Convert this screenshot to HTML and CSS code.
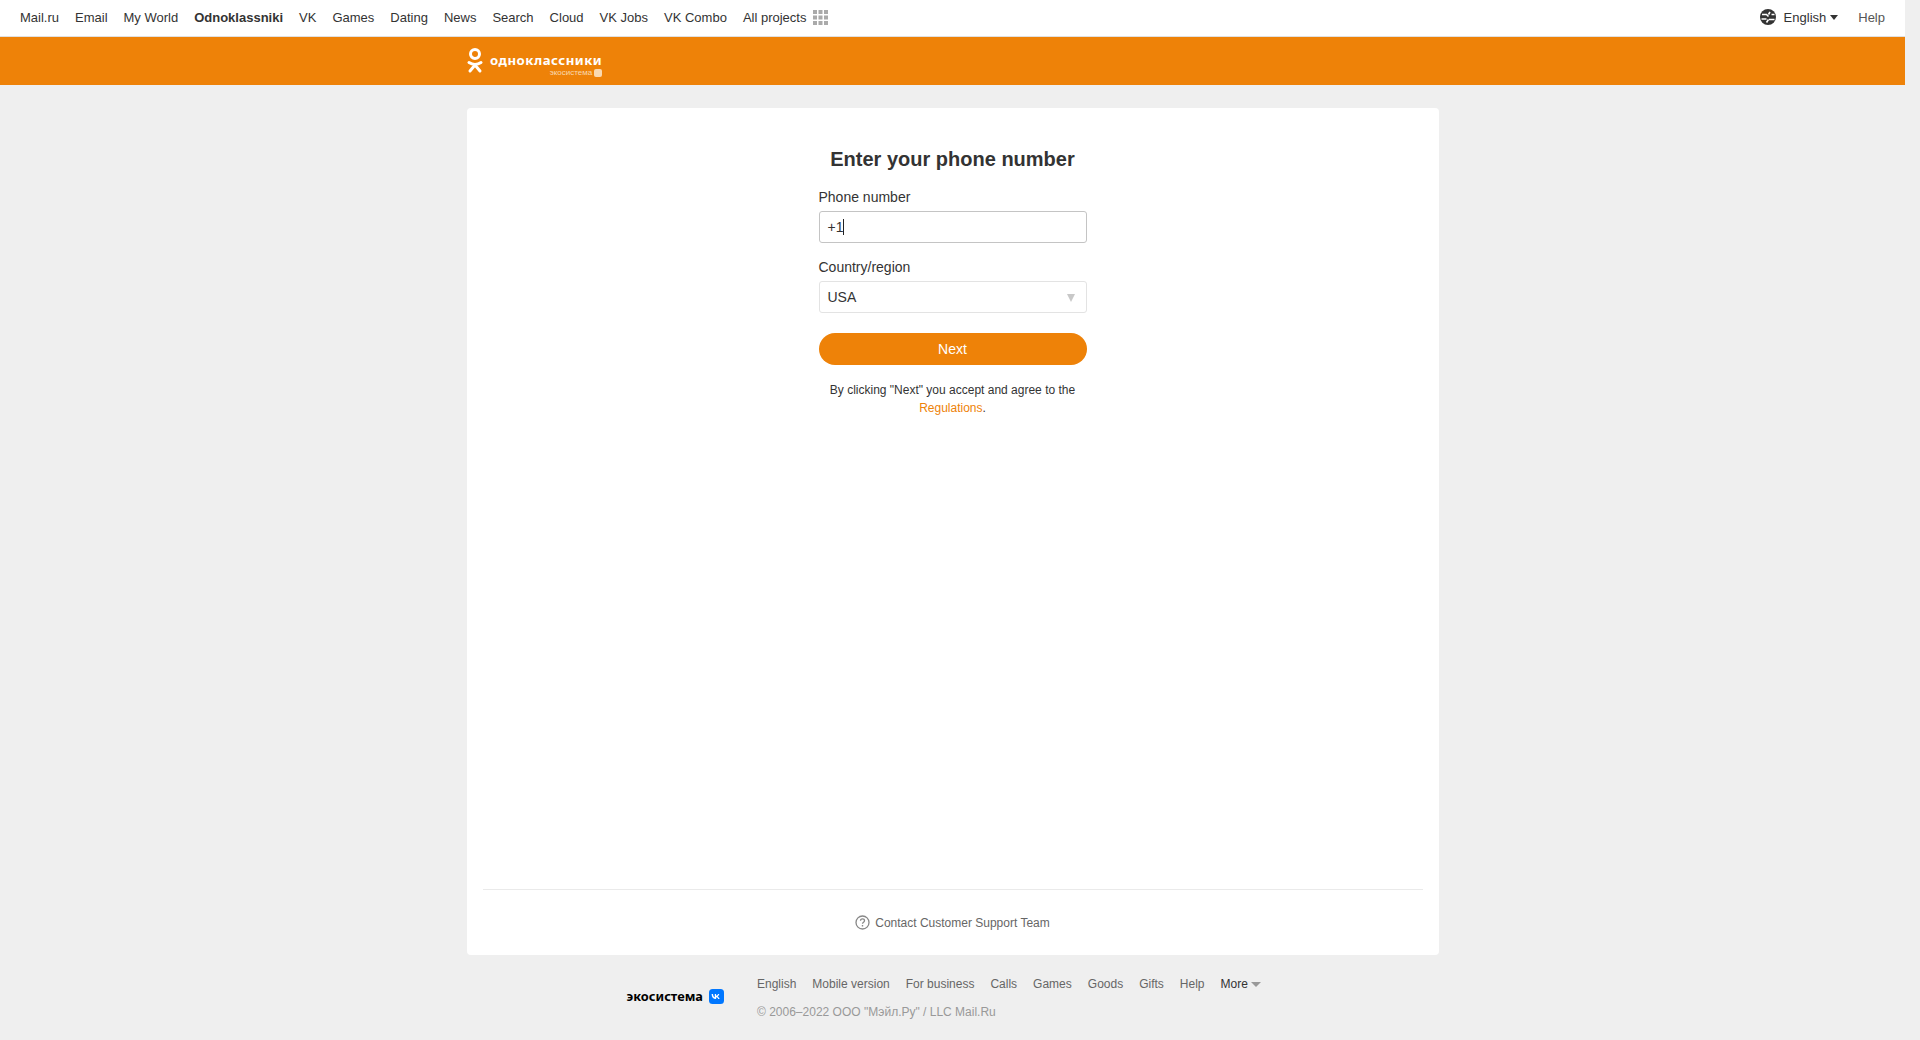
FILE: index.html
```html
<!DOCTYPE html>
<html lang="en">
<head>
<meta charset="utf-8">
<title>Enter your phone number</title>
<link rel="stylesheet" href="styles.css">
</head>
<body>
<div class="page">
  <header class="topbar">
    <nav class="topnav">
      <a>Mail.ru</a><a>Email</a><a>My World</a><a class="current">Odnoklassniki</a><a>VK</a><a>Games</a><a>Dating</a><a>News</a><a>Search</a><a>Cloud</a><a>VK Jobs</a><a>VK Combo</a>
      <a class="all">All projects
        <svg class="grid-icon" width="15" height="15" viewBox="0 0 15 15"><g fill="#aaa"><rect width="4" height="4"/><rect x="5.500" width="4" height="4"/><rect x="11" width="4" height="4"/><rect y="5.500" width="4" height="4"/><rect x="5.500" y="5.500" width="4" height="4"/><rect x="11" y="5.500" width="4" height="4"/><rect y="11" width="4" height="4"/><rect x="5.500" y="11" width="4" height="4"/><rect x="11" y="11" width="4" height="4"/></g></svg>
      </a>
    </nav>
    <div class="topright">
      <a class="lang">
        <svg width="16" height="16" viewBox="0 0 16 16"><circle cx="8" cy="8" r="8" fill="#333"/><path d="M2 5.500h4.500l2 2M14.500 5.500h-3M1.500 10h5M9 10.500h5.500M6.500 13.500l2-3M10 3l-1.500 2.500" stroke="#fff" stroke-width="1.600" fill="none"/></svg>
        <span>English</span><i class="caret"></i>
      </a>
      <a class="help">Help</a>
    </div>
  </header>
  <div class="brandbar">
    <div class="brand">
      <svg class="ok-icon" width="16" height="26" viewBox="0 0 16 26"><circle cx="8" cy="6" r="4.500" fill="none" stroke="#fff" stroke-width="3"/><path d="M2 14.500c3.500 2.400 8.500 2.400 12 0" fill="none" stroke="#fff" stroke-width="3" stroke-linecap="round"/><path d="M8 17l-5 6M8 17l5 6" fill="none" stroke="#fff" stroke-width="3" stroke-linecap="round"/></svg>
      <div class="brand-text">
        <span class="brand-name">одноклассники</span>
        <span class="brand-eco">экосистема <i class="eco-badge"></i></span>
      </div>
    </div>
  </div>
  <main class="card">
    <section class="form">
      <h1 class="title">Enter your phone number</h1>
      <label class="field-label">Phone number</label>
      <div class="input focused">+1<span class="text-caret"></span></div>
      <label class="field-label">Country/region</label>
      <div class="input select">USA<i class="select-arrow"></i></div>
      <button class="next">Next</button>
      <p class="terms">By clicking "Next" you accept and agree to the <a>Regulations</a>.</p>
    </section>
    <div class="support">
      <svg width="15" height="15" viewBox="0 0 15 15"><circle cx="7.500" cy="7.500" r="6.500" fill="none" stroke="#888" stroke-width="1.300"/><path d="M5.500 5.800c0-1.200.9-1.900 2-1.900s2 .7 2 1.800c0 1.500-2 1.500-2 3.100" fill="none" stroke="#888" stroke-width="1.300"/><rect x="6.800" y="10" width="1.400" height="1.500" fill="#888"/></svg>
      <a>Contact Customer Support Team</a>
    </div>
  </main>
  <footer class="footer">
    <div class="eco">
      <span>экосистема</span>
      <svg width="15" height="15" viewBox="0 0 15 15"><rect width="15" height="15" rx="3.500" fill="#0077ff"/><path d="M2.600 5h1.400c.1 2 1 3 1.800 3.200V5h1.300v1.800c.8-.1 1.600-.9 1.900-1.800h1.300c-.2 1.100-1 2-1.700 2.400.7.400 1.600 1.100 2 2.600h-1.400c-.3-.9-1-1.600-2.100-1.700V10h-.2C4.200 10 2.700 8.300 2.600 5z" fill="#fff"/></svg>
    </div>
    <div class="foot-main">
      <nav class="footnav">
        <a>English</a><a>Mobile version</a><a>For business</a><a>Calls</a><a>Games</a><a>Goods</a><a>Gifts</a><a>Help</a><a class="more">More<i class="more-caret"></i></a>
      </nav>
      <div class="copyright">© 2006–2022 ООО "Мэйл.Ру" / LLC Mail.Ru</div>
    </div>
  </footer>
</div>
</body>
</html>
```
FILE: styles.css
```css
html, body {
  margin: 0;
  height: 100%;
  background: #efefef;
  overflow: hidden;
}
body {
  font-family: "Liberation Sans", Arial, sans-serif;
  color: #333;
}
.page {
  width: 1905px;
}
.topbar {
  height: 34px;
  background: #fff;
  border-bottom: 1px solid #e0e0e0;
  display: flex;
  justify-content: space-between;
  align-items: center;
  padding: 0 20px 2px 20px;
  font-size: 13px;
}
.topnav {
  display: flex;
  gap: 16px;
  align-items: center;
  color: #333;
}
.topnav .current {
  font-weight: bold;
}
.all {
  display: flex;
  align-items: center;
  gap: 7px;
}
.topright {
  display: flex;
  align-items: center;
  gap: 20px;
}
.lang {
  display: flex;
  align-items: center;
  gap: 8px;
}
.caret {
  width: 0;
  height: 0;
  margin-left: -4px;
  border: 4px solid transparent;
  border-top: 5px solid #333;
  border-bottom: 0;
}
.help {
  color: #555;
}
.brandbar {
  height: 48px;
  background: #ee8208;
}
.brand {
  width: 972px;
  margin: 0 auto;
  height: 100%;
  display: flex;
  align-items: center;
  gap: 7px;
  color: #fff;
  padding-left: 1px;
}
.brand-text {
  display: flex;
  flex-direction: column;
  align-items: flex-end;
  margin-top: 8px;
}
.brand-name {
  font-family: "Noto Sans", sans-serif;
  font-size: 13.200px;
  font-weight: 700;
  line-height: 12px;
  letter-spacing: 0.5px;
}
.brand-eco {
  font-size: 8px;
  line-height: 8px;
  margin-top: 3px;
  color: #f9d9b0;
  display: flex;
  align-items: center;
  gap: 2px;
}
.eco-badge {
  width: 8px;
  height: 8px;
  border-radius: 2px;
  background: #f9d9b0;
}
.card {
  width: 972px;
  height: 847px;
  margin: 23px auto 0;
  background: #fff;
  border-radius: 4px;
  display: flex;
  flex-direction: column;
  padding: 0 16px;
  box-sizing: border-box;
}
.form {
  flex: 1;
  width: 268px;
  margin: 0 auto;
  display: flex;
  flex-direction: column;
}
.title {
  margin: 39px -20px 0;
  font-size: 20px;
  line-height: 24px;
  font-weight: bold;
  text-align: center;
  color: #333;
}
.field-label {
  font-size: 14px;
  line-height: 18px;
  margin-top: 17px;
  margin-bottom: 5px;
}
.input {
  position: relative;
  height: 32px;
  box-sizing: border-box;
  border: 1px solid #e3e3e3;
  border-radius: 3px;
  padding: 0 8px;
  font-size: 14px;
  line-height: 30px;
  background: #fff;
  display: flex;
  align-items: center;
}
.input.focused {
  border-color: #c4c4c4;
}
.input + .field-label {
  margin-top: 15px;
}
.text-caret {
  width: 1px;
  height: 16px;
  background: #222;
}
.select-arrow {
  position: absolute;
  right: 11px;
  top: 12px;
  width: 0;
  height: 0;
  border: 4px solid transparent;
  border-top: 8px solid #c8c8c8;
  border-bottom: 0;
}
.next {
  margin-top: 20px;
  height: 32px;
  border: 0;
  border-radius: 16px;
  background: #ee8208;
  color: #fff;
  font-family: inherit;
  font-size: 14px;
}
.terms {
  margin: 16px 0 0;
  font-size: 12px;
  line-height: 18px;
  text-align: center;
  color: #333;
}
.terms a {
  color: #ee8208;
}
.support {
  height: 65px;
  border-top: 1px solid #eaeaea;
  display: flex;
  justify-content: center;
  align-items: center;
  gap: 5px;
  font-size: 12px;
  color: #666;
}
.footer {
  width: 972px;
  margin: 19px auto 0;
  display: flex;
  font-size: 12px;
}
.eco {
  width: 290.500px;
  box-sizing: border-box;
  padding: 15px 33px 0 0;
  display: flex;
  justify-content: flex-end;
  align-items: flex-start;
  gap: 6px;
  font-size: 12.800px;
  font-weight: 700;
  font-family: "Noto Sans", sans-serif;
  color: #000;
  height: 30px;
}
.eco span {
  line-height: 15px;
}
.footnav {
  display: flex;
  gap: 16px;
  color: #666;
  line-height: 20px;
}
.more {
  color: #333;
  display: flex;
  align-items: center;
  gap: 3px;
}
.more-caret {
  width: 0;
  height: 0;
  border: 5px solid transparent;
  border-top: 5px solid #999;
  border-bottom: 0;
}
.copyright {
  margin-top: 8px;
  line-height: 20px;
  color: #999;
}
```
